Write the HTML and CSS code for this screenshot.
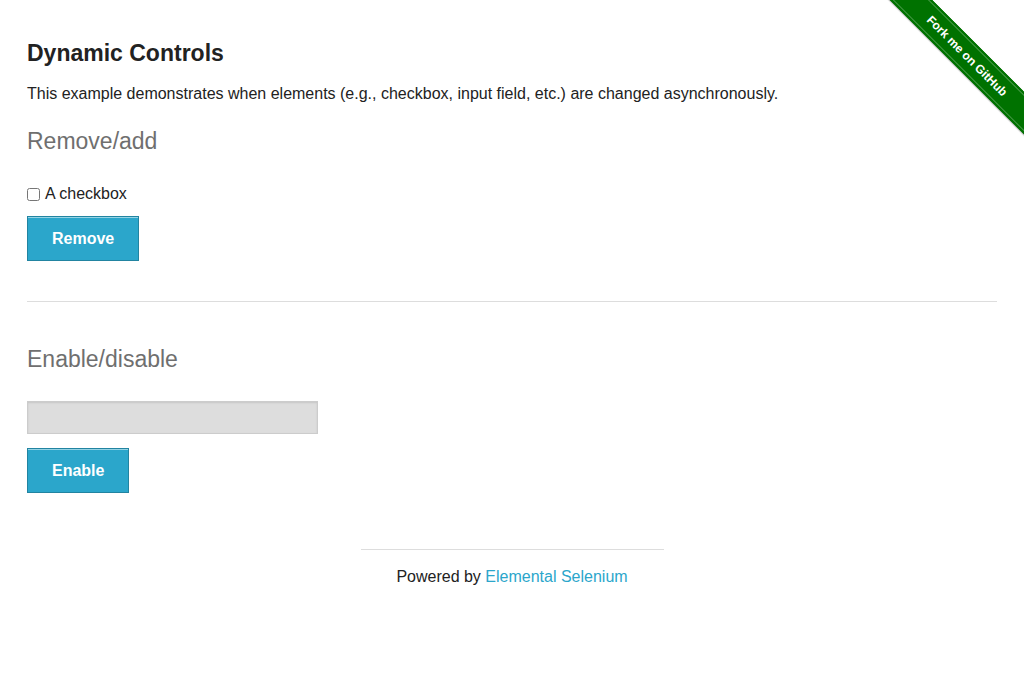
FILE: index.html
```html
<!DOCTYPE html>
<html>
<head>
<meta charset="utf-8">
<link rel="stylesheet" href="styles.css">
</head>
<body>
<div class="ribbon-wrap"><a class="ribbon" href="#">Fork me on GitHub</a></div>
<div class="row">
  <div class="col">
    <h3 class="title">Dynamic Controls</h3>
    <p class="intro">This example demonstrates when elements (e.g., checkbox, input field, etc.) are changed asynchronously.</p>
    <h4 class="subtitle">Remove/add</h4>
    <form class="block block-checkbox">
      <div class="check-row"><input type="checkbox" class="cb"> A checkbox</div>
      <button type="button" class="btn btn-remove">Remove</button>
    </form>
    <hr class="divider">
    <h4 class="subtitle subtitle-second">Enable/disable</h4>
    <form class="block block-input">
      <input type="text" class="field" disabled>
      <button type="button" class="btn btn-enable">Enable</button>
    </form>
  </div>
</div>
<footer class="footer">
  <hr class="footer-rule">
  <div class="powered">Powered by <a href="#" class="link">Elemental Selenium</a></div>
</footer>
</body>
</html>
```
FILE: styles.css
```css
html, body {
  margin: 0;
  padding: 0;
  background: #fff;
}
body {
  font-family: "Liberation Sans", Arial, sans-serif;
  color: #222;
  font-size: 16px;
}
.row {
  max-width: 1000px;
  margin: 0 auto;
}
.col {
  padding: 0 15px;
}
.title {
  font-size: 23px;
  font-weight: bold;
  margin: 0;
  padding-top: 40px;
  line-height: 27px;
}
.intro {
  margin: 16px 0 0;
  line-height: 22px;
}
.subtitle {
  font-size: 23px;
  font-weight: normal;
  color: #6f6f6f;
  margin: 22px 0 0;
  line-height: 28px;
}
.subtitle-second {
  margin-top: 43px;
}
.block {
  display: flex;
  flex-direction: column;
  align-items: flex-start;
}
.block-checkbox {
  margin-top: 29px;
}
.block-input {
  margin-top: 28px;
}
.check-row {
  display: flex;
  align-items: center;
  line-height: 20px;
  height: 20px;
}
.cb {
  margin: 0 5px 0 0;
  width: 13px;
  height: 13px;
}
.btn {
  font-family: "Liberation Sans", Arial, sans-serif;
  font-weight: bold;
  font-size: 16px;
  color: #fff;
  background: #2ba6cb;
  border: 1px solid #2284a1;
  box-shadow: inset 0 1px 0 rgba(255,255,255,0.5);
  height: 45px;
  padding: 0 24px;
  cursor: pointer;
}
.btn-remove {
  width: 112px;
  margin-top: 12px;
}
.btn-enable {
  width: 102px;
  margin-top: 14px;
}
.field {
  width: 291px;
  height: 33px;
  box-sizing: border-box;
  background: #ddd;
  border: 1px solid #ccc;
  box-shadow: inset 0 1px 2px rgba(0,0,0,0.1);
  margin: 0;
}
.divider {
  border: 0;
  border-top: 1px solid #ddd;
  margin: 40px 0 0;
  height: 0;
}
.footer {
  display: flex;
  flex-direction: column;
  align-items: center;
  margin-top: 56px;
}
.footer-rule {
  width: 303px;
  border: 0;
  border-top: 1px solid #ddd;
  margin: 0;
  height: 0;
}
.powered {
  margin-top: 17px;
  line-height: 20px;
}
.link {
  color: #2ba6cb;
  text-decoration: none;
}
.ribbon-wrap {
  position: absolute;
  top: 0;
  right: 0;
  width: 149px;
  height: 149px;
  overflow: hidden;
}
.ribbon {
  position: absolute;
  left: -8px;
  top: 41px;
  width: 200px;
  height: 30px;
  box-sizing: border-box;
  background: #007200;
  transform: rotate(45deg);
  color: #fff;
  font-family: "Liberation Sans", Arial, sans-serif;
  font-weight: bold;
  font-size: 12px;
  line-height: 26px;
  text-align: center;
  text-decoration: none;
  border-top: 2px solid #007200;
  border-bottom: 2px solid #007200;
  box-shadow: inset 0 1px 0 rgba(255,255,255,0.3), inset 0 -1px 0 rgba(255,255,255,0.3), 0 1px 1px rgba(0,0,0,0.3);
}
```
